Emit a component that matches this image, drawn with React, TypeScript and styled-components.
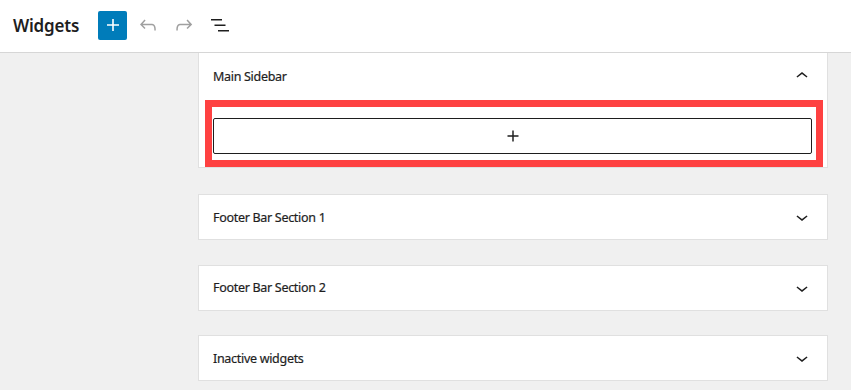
import React from 'react';
import styled, { createGlobalStyle } from 'styled-components';

const GlobalStyle = createGlobalStyle`
  html, body {
    margin: 0;
    padding: 0;
    background: #f0f0f0;
    font-family: "Noto Sans", "Liberation Sans", sans-serif;
    color: #1e1e1e;
  }
  * { box-sizing: border-box; }
`

const Page = styled.div`
  width: 851px;
  height: 390px;
  overflow: hidden;
  background: #f0f0f0;
`

const Header = styled.header`
  height: 53px;
  background: #fff;
  border-bottom: 1px solid #d6d6d6;
  display: flex;
  align-items: center;
  padding: 0 0 2px 13px;
`

const Title = styled.h1`
  width: 85px;
  margin: 0;
  font-size: 17px;
  font-weight: 600;
  letter-spacing: -0.2px;
`

const InserterButton = styled.button`
  width: 29px;
  height: 29px;
  margin-right: 3px;
  padding: 0;
  border: 0;
  border-radius: 2px;
  background: #007cba;
  color: #fff;
  display: flex;
  align-items: center;
  justify-content: center;
`

interface ToolProps {
  readonly $disabled?: boolean
}

const ToolButton = styled.button<ToolProps>`
  width: 36px;
  height: 29px;
  padding: 0;
  border: 0;
  background: transparent;
  color: ${props => props.$disabled ? '#a0a0a0' : '#1e1e1e'};
  display: flex;
  align-items: center;
  justify-content: center;
`

const Main = styled.main`
  padding-left: 198px;
`

const Column = styled.div`
  width: 630px;
  display: flex;
  flex-direction: column;
  gap: 24.5px;
`

interface PanelProps {
  readonly $first?: boolean
}

const Panel = styled.section<PanelProps>`
  background: #fff;
  border: 1px solid #e0e0e0;
  border-top: ${props => props.$first ? '0' : '1px solid #e0e0e0'};
  margin-bottom: ${props => props.$first ? '1.5px' : '0'};
`

interface PanelHeaderProps {
  readonly $tall?: boolean
}

const PanelHeader = styled.div<PanelHeaderProps>`
  height: ${props => props.$tall ? '46px' : '44px'};
  display: flex;
  align-items: center;
  justify-content: space-between;
  padding: 0 13px 0 14px;
  font-size: 12.5px;
  font-weight: 400;
  letter-spacing: -0.3px;
  -webkit-text-stroke: 0.2px #1e1e1e;
`

const PanelBody = styled.div`
  position: relative;
  padding: 19px 14px 13px 14px;
`

const Appender = styled.button`
  width: 599px;
  height: 36px;
  padding: 0;
  background: #fff;
  border: 1px solid #1e1e1e;
  border-radius: 2px;
  color: #1e1e1e;
  display: flex;
  align-items: center;
  justify-content: center;
`

// red annotation frame drawn over the appender
const Highlight = styled.div`
  position: absolute;
  left: 6px;
  top: 1px;
  width: 618px;
  height: 67px;
  border: 7px solid #fe4141;
  pointer-events: none;
`

const Icon = ({ d, size = 24 }: { d: string, size?: number }) => (
  <svg width={size} height={size} viewBox="0 0 24 24" fill="currentColor">
    <path d={d} />
  </svg>
);

const PLUS = 'M18 11.2h-5.2V6h-1.6v5.2H6v1.6h5.2V18h1.6v-5.2H18z';
const UNDO = 'M18.3 11.7c-.6-.6-1.4-.9-2.3-.9H6.7l2.9-3.3-1.1-1-4.5 5L8.5 16l1-1-2.7-2.7H16c.5 0 .9.2 1.3.5 1 1 1 3.4 1 4.5v.3h1.5v-.2c0-1.5 0-4.3-1.5-5.7z';
const REDO = 'M15.6 6.5l-1.1 1 2.9 3.3H8c-.9 0-1.7.3-2.3.9-1.4 1.5-1.4 4.2-1.4 5.6v.2h1.5v-.3c0-1.1 0-3.5 1-4.5.3-.3.7-.5 1.3-.5h9.2L14.5 15l1.1 1.1 4.6-4.6-4.6-5z';
const LIST = 'M3 6h11v1.5H3V6Zm3.5 5.5h11V13h-11v-1.5ZM21 17H10v1.5h11V17Z';
const CHEVRON_UP = 'M6.5 12.4L12 8l5.5 4.4-.9 1.2L12 10l-4.6 3.6-1-1.2z';
const CHEVRON_DOWN = 'M17.5 11.6L12 16l-5.5-4.4.9-1.2L12 14l4.6-3.6 1 1.2z';

const areas = ['Footer Bar Section 1', 'Footer Bar Section 2', 'Inactive widgets'];

const App: React.FC = () => {
  return (
    <Page>
      <GlobalStyle />
      <Header>
        <Title>Widgets</Title>
        <InserterButton aria-label="Add block"><Icon d={PLUS} /></InserterButton>
        <ToolButton $disabled aria-label="Undo"><Icon d={UNDO} /></ToolButton>
        <ToolButton $disabled aria-label="Redo"><Icon d={REDO} /></ToolButton>
        <ToolButton aria-label="List view"><Icon d={LIST} /></ToolButton>
      </Header>
      <Main>
        <Column>
          <Panel $first>
            <PanelHeader $tall>
              <span>Main Sidebar</span>
              <Icon d={CHEVRON_UP} />
            </PanelHeader>
            <PanelBody>
              <Appender aria-label="Add block"><Icon d={PLUS} size={22} /></Appender>
              <Highlight />
            </PanelBody>
          </Panel>
          {areas.map(name => (
            <Panel key={name}>
              <PanelHeader>
                <span>{name}</span>
                <Icon d={CHEVRON_DOWN} />
              </PanelHeader>
            </Panel>
          ))}
        </Column>
      </Main>
    </Page>
  );
}

export default App;
